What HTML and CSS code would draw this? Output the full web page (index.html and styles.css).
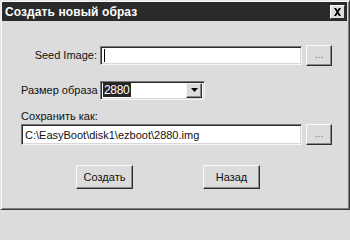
FILE: index.html
```html
<!DOCTYPE html>
<html>
<head>
<meta charset="utf-8">
<link rel="stylesheet" href="styles.css">
</head>
<body>
<div class="window">
  <div class="titlebar">
    <span class="title">Создать новый образ</span>
    <span class="close"><svg width="9" height="8" viewBox="0 0 9 8"><path d="M1 0h2l1.5 2.2L6 0h2L5.5 4 8 8H6L4.5 5.8 3 8H1l2.5-4z" fill="#000"/></svg></span>
  </div>
  <div class="content">
    <div class="row row-seed">
      <label class="lbl lbl-right">Seed Image:</label>
      <div class="field field-seed"><span class="caret"></span></div>
      <div class="btn btn-dots">...</div>
    </div>
    <div class="row row-size">
      <label class="lbl">Размер образа</label>
      <div class="field combo">
        <span class="sel">2880</span>
        <span class="arrow"><svg width="7" height="4" viewBox="0 0 7 4"><path d="M0 0h7L3.5 4z" fill="#000"/></svg></span>
      </div>
    </div>
    <div class="save-label">Сохранить как:</div>
    <div class="row row-save">
      <div class="field field-save">C:\EasyBoot\disk1\ezboot\2880.img</div>
      <div class="btn btn-dots">...</div>
    </div>
    <div class="actions">
      <div class="btn btn-main btn-create">Создать</div>
      <div class="btn btn-main btn-back">Назад</div>
    </div>
  </div>
</div>
</body>
</html>
```
FILE: styles.css
```css
html, body {
  margin: 0;
  padding: 0;
  background: #dcdcdc;
}
body {
  font-family: "Liberation Sans", Arial, sans-serif;
  font-size: 11px;
  color: #111;
}
.window {
  width: 350px;
  height: 210px;
  box-sizing: border-box;
  background: #dcdcdc;
  border-top: 1px solid #e6e6e6;
  border-left: 1px solid #e6e6e6;
  border-right: 1px solid #3a3a3a;
  border-bottom: 1px solid #3a3a3a;
  box-shadow: inset 1px 1px 0 #f8f8f8, inset -1px -1px 0 #808080;
  padding: 1px 2px 2px 1px;
  display: flex;
  flex-direction: column;
}
.titlebar {
  height: 19px;
  background: #2a2a2a;
  display: flex;
  align-items: center;
  justify-content: space-between;
  padding: 0 2px 0 3px;
}
.title {
  color: #fff;
  font-weight: bold;
  font-size: 12px;
  letter-spacing: 0.1px;
}
.close {
  width: 15px;
  height: 14px;
  box-sizing: border-box;
  background: #dcdcdc;
  border-top: 1px solid #fff;
  border-left: 1px solid #fff;
  border-right: 1px solid #303030;
  border-bottom: 1px solid #303030;
  display: flex;
  align-items: center;
  justify-content: center;
}
.content {
  flex: 1;
  display: flex;
  flex-direction: column;
  padding: 24px 0 0 19px;
}
.row {
  display: flex;
  align-items: center;
}
.row-seed { height: 20px; }
.row-size { height: 18px; margin-top: 16px; }
.lbl {
  width: 79px;
  flex: none;
  white-space: nowrap;
}
.lbl-right {
  text-align: right;
  padding-right: 3px;
  width: 76px;
}
.field {
  box-sizing: border-box;
  background: #fff;
  border-top: 1px solid #7a7a7a;
  border-left: 1px solid #7a7a7a;
  border-right: 1px solid #f4f4f4;
  border-bottom: 1px solid #f4f4f4;
  box-shadow: inset 1px 1px 0 #2a2a2a, inset -1px -1px 0 #d8d8d8;
  display: flex;
  align-items: center;
}
.field-seed {
  width: 202px;
  height: 19px;
  padding-left: 3px;
}
.caret {
  width: 1px;
  height: 13px;
  background: #000;
}
.combo {
  width: 105px;
  height: 19px;
  padding: 2px;
  justify-content: space-between;
}
.sel {
  background: #262626;
  color: #fff;
  padding: 0 1px;
  line-height: 14px;
  height: 14px;
  font-size: 12px;
  letter-spacing: -0.3px;
}
.arrow {
  width: 16px;
  height: 15px;
  box-sizing: border-box;
  background: #dcdcdc;
  border-top: 1px solid #f4f4f4;
  border-left: 1px solid #f4f4f4;
  border-right: 1px solid #303030;
  border-bottom: 1px solid #303030;
  box-shadow: inset -1px -1px 0 #8a8a8a;
  display: flex;
  align-items: center;
  justify-content: center;
}
.save-label {
  margin-top: 11px;
  height: 14px;
  line-height: 13px;
}
.row-save { height: 21px; }
.field-save {
  width: 281px;
  height: 21px;
  padding-left: 3px;
  font-size: 11px;
  white-space: nowrap;
}
.btn {
  box-sizing: border-box;
  background: #dcdcdc;
  border-top: 1px solid #fafafa;
  border-left: 1px solid #fafafa;
  border-right: 1px solid #2e2e2e;
  border-bottom: 1px solid #2e2e2e;
  box-shadow: inset -1px -1px 0 #8a8a8a;
  display: flex;
  align-items: center;
  justify-content: center;
}
.btn-dots {
  width: 26px;
  height: 21px;
  margin-left: 4px;
  color: #777;
  font-size: 10px;
  padding-bottom: 2px;
}
.actions {
  display: flex;
  margin-top: 20px;
  padding-left: 55px;
}
.btn-main {
  width: 57px;
  height: 24px;
  font-size: 11px;
}
.btn-back {
  margin-left: 70px;
}
```
